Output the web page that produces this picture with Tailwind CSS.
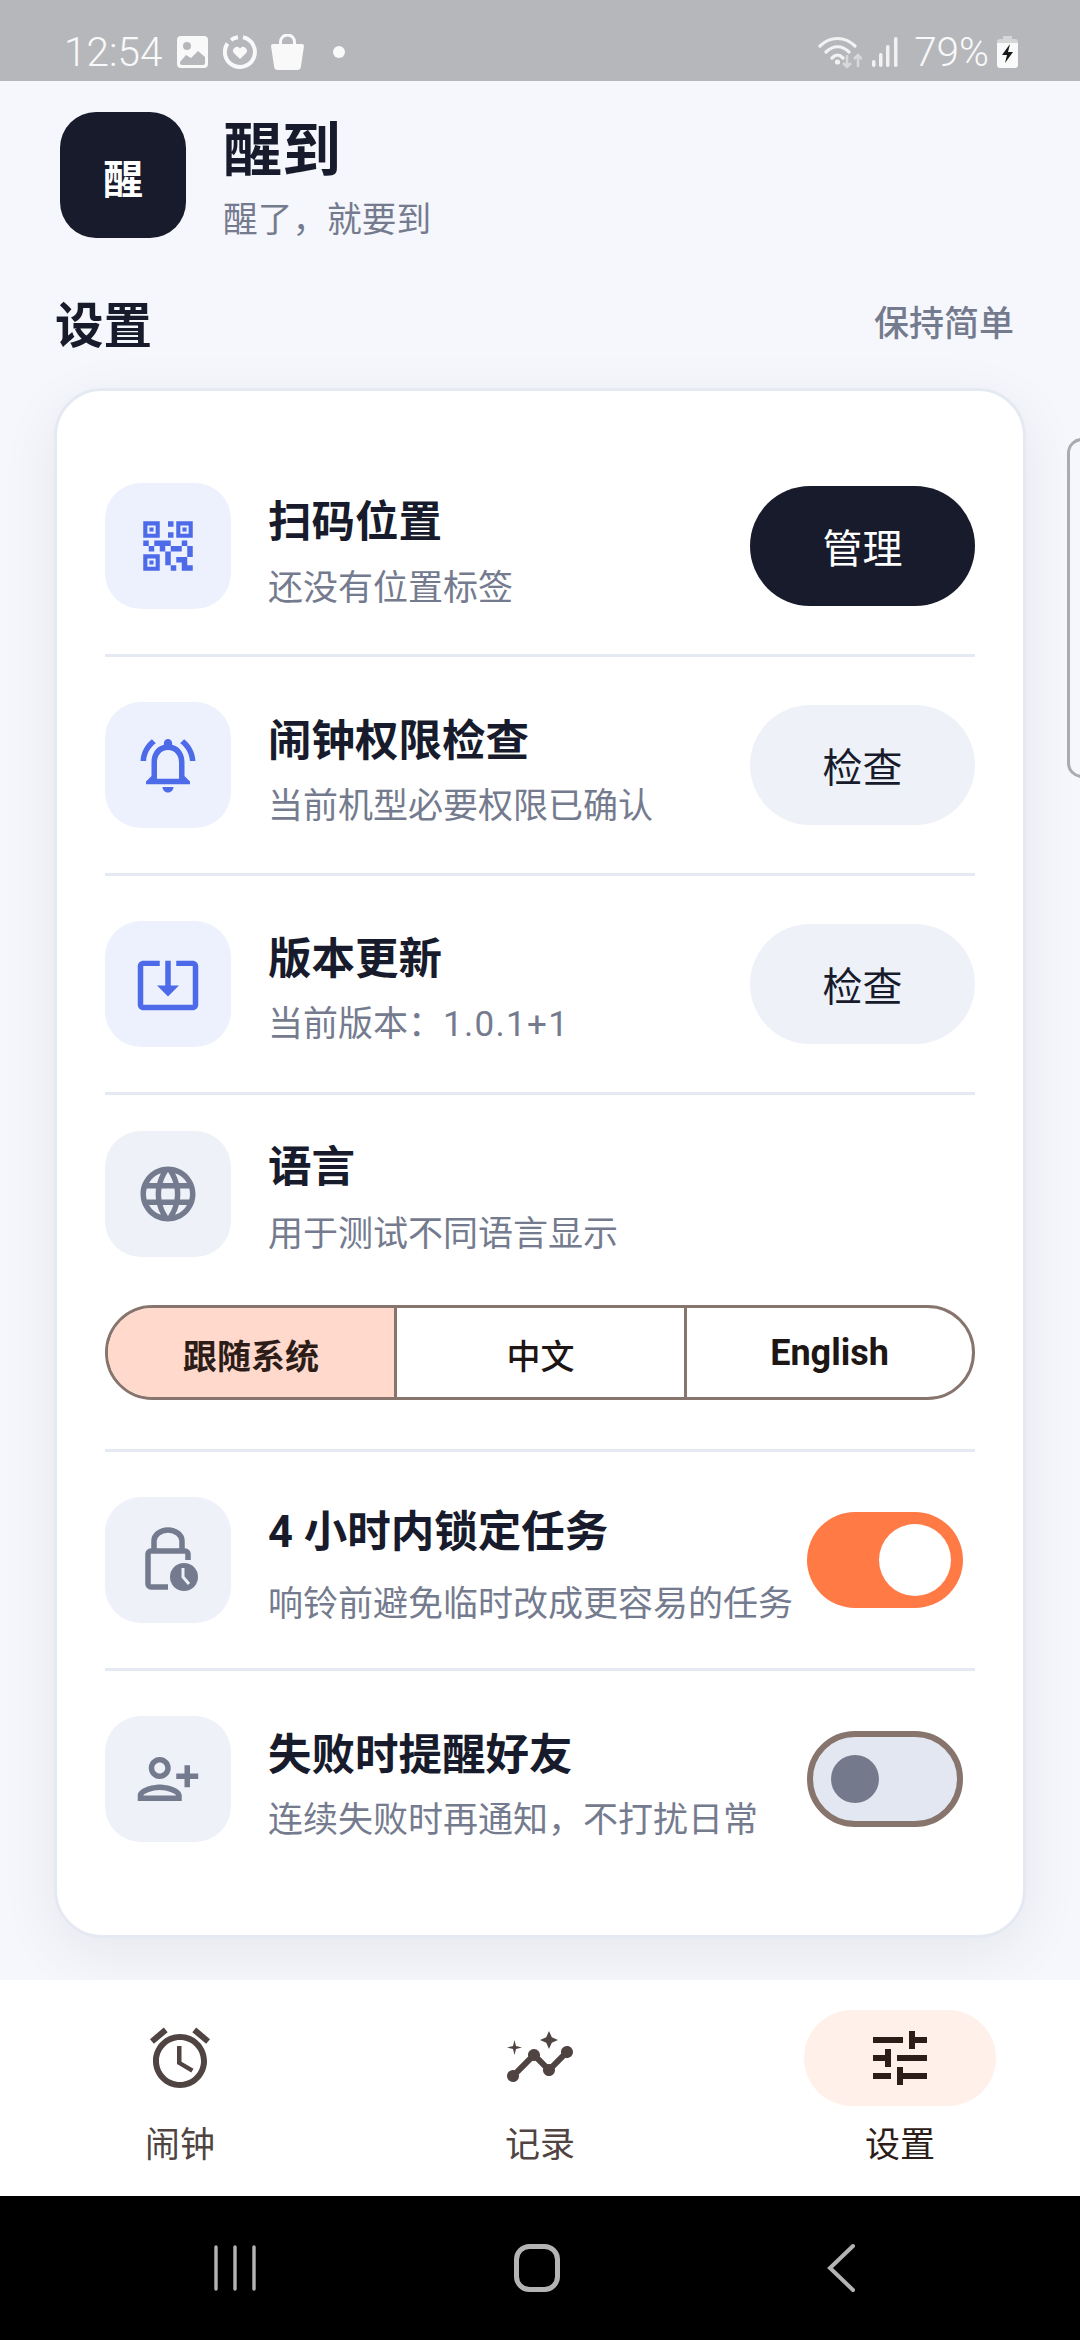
<!DOCTYPE html>
<html lang="zh-CN">
<head>
<meta charset="utf-8">
<script src="https://cdn.jsdelivr.net/npm/@tailwindcss/browser@4"></script>
</head>
<body class="m-0">
<div class="relative w-[1080px] h-[2340px] overflow-hidden flex flex-col bg-[#f6f7fc] [font-family:'Roboto','Noto_Sans_CJK_SC',sans-serif]">

  <!-- status bar -->
  <div class="h-[81px] shrink-0 bg-[#b6b7bb] flex items-center justify-between pl-[64px] pr-[62px] pt-[23px] text-[#f9f9fa]">
    <div class="flex items-center">
      <span class="text-[40.500px] leading-[44px] font-light">12:54</span>
      <svg class="ml-[15px]" width="31" height="32" viewBox="0 0 31 32"><path fill="#f9f9fa" fill-rule="evenodd" d="M4 0h23a4 4 0 0 1 4 4v24a4 4 0 0 1-4 4H4a4 4 0 0 1-4-4V4a4 4 0 0 1 4-4zM3 26v1a2 2 0 0 0 2 2h21a2 2 0 0 0 2-2v-6l-7-6-7 7-5-3zM10 6a4 4 0 1 0 0 8 4 4 0 0 0 0-8z"/></svg>
      <svg class="ml-[15px]" width="34" height="34" viewBox="0 0 34 34" fill="none"><path d="M8 5A15 15 0 0 1 15 2.200M20 2.300A15 15 0 1 1 4.500 8.500" stroke="#f9f9fa" stroke-width="4"/><path fill="#f9f9fa" d="M17 24l-6.200-6A3.800 3.800 0 0 1 17 13.500 3.800 3.800 0 0 1 23.200 18z"/></svg>
      <svg class="ml-[14px]" width="33" height="36" viewBox="0 0 33 36"><path fill="none" stroke="#f9f9fa" stroke-width="3" d="M9.500 12V8a7 7 0 0 1 14 0v4"/><path fill="#f9f9fa" d="M2 10h29a2 2 0 0 1 2 2l-3 20a4 4 0 0 1-4 4H7a4 4 0 0 1-4-4L0 12a2 2 0 0 1 2-2z"/></svg>
      <span class="ml-[29px] w-[12px] h-[12px] rounded-full bg-[#f9f9fa]"></span>
    </div>
    <div class="flex items-center">
      <svg width="44" height="34" viewBox="0 0 44 34" fill="none">
        <path d="M2 11C12 1 27 1 37 11M8 17C15 10 24 10 31 17M14 23C18 19 21 19 25 23" stroke="#f2f2f3" stroke-width="3.200" stroke-linecap="round"/>
        <circle cx="19.500" cy="27" r="2.600" fill="#f2f2f3"/>
        <path d="M29 20v12M25 28l4 4 4-4" stroke="#d7d8da" stroke-width="2.600"/>
        <path d="M40 32V20M36 24l4-4 4 4" stroke="#d7d8da" stroke-width="2.600"/>
      </svg>
      <svg class="ml-[10px]" width="27" height="30" viewBox="0 0 27 30"><g fill="#f2f2f3"><rect x="0" y="23" width="3.500" height="7" rx="1.700"/><rect x="7" y="16" width="3.500" height="14" rx="1.700"/><rect x="14" y="8" width="3.500" height="22" rx="1.700"/><rect x="22" y="0" width="3.500" height="30" rx="1.700"/></g></svg>
      <span class="ml-[15px] text-[40.500px] leading-[44px] font-light">79%</span>
      <svg class="ml-[8px]" width="21" height="32" viewBox="0 0 21 32"><path fill="#d5d6d8" d="M6 0h9v3h3a3 3 0 0 1 3 3v5H0V6a3 3 0 0 1 3-3h3z"/><path fill="#fafafa" d="M0 7h21v22a3 3 0 0 1-3 3H3a3 3 0 0 1-3-3z"/><path fill="#17181a" d="M13 8 5 19h5l-2 8 8-11h-5z"/></svg>
    </div>
  </div>

  <!-- main -->
  <main class="h-[1899px] shrink-0 overflow-hidden">
    <header class="flex items-start h-[157px] pt-[31px] pl-[60px]">
      <div class="w-[126px] h-[126px] rounded-[36px] bg-[#171b2b] flex items-center justify-center text-white text-[40px] leading-none font-bold pt-[12px]">醒</div>
      <div class="ml-[37px] flex flex-col h-[126px] pt-[6px]">
        <h1 class="m-0 text-[59px] leading-[66px] font-bold text-[#171b2b]">醒到</h1>
        <p class="m-0 mt-[14px] text-[34.700px] leading-[44px] text-[#757b8e]">醒了，就要到</p>
      </div>
    </header>
    <div class="flex items-center justify-between pl-[55px] pr-[66px] h-[150px]">
      <h2 class="m-0 text-[48.500px] leading-[60px] font-bold text-[#171b2b] mt-[27px]">设置</h2>
      <span class="text-[35px] leading-[44px] font-medium text-[#757b8e] mt-[24px]">保持简单</span>
    </div>

    <section class="mx-[54px] h-[1550px] rounded-[48px] border-[3px] border-[#e4e9f2] bg-white px-[48px] py-[47px] shadow-[0_16px_60px_rgba(23,27,43,0.07)]">
      <!-- row 1 -->
      <div class="flex items-center h-[219px] border-b-[3px] border-[#e4e9f2]">
        <div class="w-[126px] h-[126px] shrink-0 rounded-[36px] bg-[#edf1fe] flex items-center justify-center">
          <svg width="66" height="66" viewBox="0 0 24 24" fill="#4d6ae8"><path fill-rule="evenodd" d="M15,21h-2v-2h2V21z M13,14h-2v5h2V14z M21,12h-2v4h2V12z M19,10h-2v2h2V10z M7,12H5v2h2V12z M5,10H3v2h2V10z M12,5h2V3h-2V5z M9,9H3V3h6V9z M4.500,4.500v3h3v-3H4.500z M9,21H3v-6h6V21z M4.500,16.500v3h3v-3H4.500z M21,9h-6V3h6V9z M16.500,4.500v3h3v-3H16.500z M19,19v-3l-4,0v2h2v3h4v-2H19z M17,12l-4,0v2h4V12z M13,10H7v2h2v2h2v-2h2V10z M14,9V7h-2v2h2z M6.750,5.250h-1.500v1.500h1.500V5.250z M6.750,17.250h-1.500v1.500h1.500V17.250z M18.750,5.250h-1.500v1.500h1.500V5.250z"/></svg>
        </div>
        <div class="ml-[37px] flex-1 min-w-0 pt-[14px]">
          <div class="text-[43.500px] leading-[56px] font-semibold text-[#171b2b]">扫码位置</div>
          <div class="mt-[15px] text-[35px] leading-[46px] text-[#757b8e]">还没有位置标签</div>
        </div>
        <div class="w-[225px] h-[120px] shrink-0 rounded-full bg-[#171b2b] text-white text-[40px] leading-[50px] flex items-center justify-center pt-[7px]">管理</div>
      </div>
      <!-- row 2 -->
      <div class="flex items-center h-[219px] border-b-[3px] border-[#e4e9f2]">
        <div class="w-[126px] h-[126px] shrink-0 rounded-[36px] bg-[#edf1fe] flex items-center justify-center">
          <svg width="66" height="66" viewBox="0 0 24 24" fill="#4d6ae8"><path d="M12 22c1.100 0 2-.9 2-2h-4c0 1.100.89 2 2 2zm6-6v-5c0-3.070-1.640-5.640-4.500-6.320V4c0-.83-.67-1.500-1.500-1.500s-1.500.67-1.500 1.500v.68C7.630 5.360 6 7.920 6 11v5l-2 2v1h16v-1l-2-2zm-2 1H8v-6c0-2.480 1.510-4.500 4-4.500s4 2.020 4 4.500v6zM7.580 4.080 6.150 2.650C3.750 4.480 2.170 7.300 2.030 10.500h2c.15-2.650 1.510-4.970 3.550-6.420zm12.390 6.420h2c-.15-3.200-1.730-6.020-4.120-7.850l-1.420 1.430c2.020 1.450 3.390 3.770 3.540 6.420z"/></svg>
        </div>
        <div class="ml-[37px] flex-1 min-w-0 pt-[14px]">
          <div class="text-[43.500px] leading-[56px] font-semibold text-[#171b2b]">闹钟权限检查</div>
          <div class="mt-[14px] text-[35px] leading-[46px] text-[#757b8e]">当前机型必要权限已确认</div>
        </div>
        <div class="w-[225px] h-[120px] shrink-0 rounded-full bg-[#eef1f8] text-[#171b2b] text-[40px] leading-[50px] flex items-center justify-center pt-[7px]">检查</div>
      </div>
      <!-- row 3 -->
      <div class="flex items-center h-[219px] border-b-[3px] border-[#e4e9f2]">
        <div class="w-[126px] h-[126px] shrink-0 rounded-[36px] bg-[#edf1fe] flex items-center justify-center">
          <svg width="66" height="66" viewBox="0 0 24 24" fill="#4d6ae8"><path d="M12 16.500l4-4h-3v-9h-2v9H8l4 4zm9-13h-6v1.990h6v14.030H3V5.490h6V3.500H3c-1.100 0-2 .9-2 2v14c0 1.100.9 2 2 2h18c1.100 0 2-.9 2-2v-14c0-1.100-.9-2-2-2z"/></svg>
        </div>
        <div class="ml-[37px] flex-1 min-w-0 pt-[12px]">
          <div class="text-[43.500px] leading-[56px] font-semibold text-[#171b2b]">版本更新</div>
          <div class="mt-[14px] text-[35px] leading-[46px] text-[#757b8e]">当前版本：<span class="tracking-[1.300px]">1.0.1+1</span></div>
        </div>
        <div class="w-[225px] h-[120px] shrink-0 rounded-full bg-[#eef1f8] text-[#171b2b] text-[40px] leading-[50px] flex items-center justify-center pt-[7px]">检查</div>
      </div>
      <!-- row 4 language -->
      <div class="pt-[36px] pb-[49px] border-b-[3px] border-[#e4e9f2]">
        <div class="flex items-center h-[126px]">
          <div class="w-[126px] h-[126px] shrink-0 rounded-[36px] bg-[#eef1f8] flex items-center justify-center">
            <svg width="66" height="66" viewBox="0 0 24 24" fill="#757b8e"><path d="M11.990 2C6.470 2 2 6.480 2 12s4.470 10 9.990 10C17.520 22 22 17.520 22 12S17.520 2 11.990 2zm6.930 6h-2.950c-.32-1.250-.78-2.450-1.380-3.560 1.840.63 3.370 1.910 4.330 3.560zM12 4.040c.83 1.200 1.480 2.530 1.910 3.960h-3.820c.43-1.430 1.080-2.760 1.910-3.960zM4.260 14C4.100 13.360 4 12.690 4 12s.1-1.360.26-2h3.380c-.08.66-.14 1.320-.14 2s.06 1.340.14 2H4.260zm.82 2h2.950c.32 1.250.78 2.450 1.380 3.560-1.840-.63-3.370-1.900-4.330-3.560zm2.950-8H5.080c.96-1.660 2.490-2.930 4.330-3.560C8.810 5.550 8.350 6.750 8.030 8zM12 19.960c-.83-1.200-1.480-2.530-1.910-3.960h3.820c-.43 1.430-1.080 2.760-1.910 3.960zM14.340 14H9.660c-.09-.66-.16-1.320-.16-2s.07-1.350.16-2h4.680c.09.650.16 1.320.16 2s-.07 1.340-.16 2zm.25 5.560c.6-1.110 1.060-2.310 1.380-3.560h2.950c-.96 1.650-2.490 2.930-4.330 3.560zM16.360 14c.08-.66.14-1.320.14-2s-.06-1.340-.14-2h3.380c.16.64.26 1.310.26 2s-.1 1.360-.26 2h-3.380z"/></svg>
          </div>
          <div class="ml-[37px] flex-1 min-w-0 pt-[10px]">
            <div class="text-[43.500px] leading-[56px] font-semibold text-[#171b2b]">语言</div>
            <div class="mt-[16px] text-[35px] leading-[46px] text-[#757b8e]">用于测试不同语言显示</div>
          </div>
        </div>
        <div class="mt-[48px] h-[95px] rounded-full border-[3px] border-[#87756d] overflow-hidden grid grid-cols-[289px_290px_1fr] text-[#1d1614]">
          <div class="bg-[#ffd9cc] border-r-[3px] border-[#87756d] flex items-center justify-center text-[34px] font-semibold text-[#2d1d18] pt-[9px]">跟随系统</div>
          <div class="border-r-[3px] border-[#87756d] flex items-center justify-center text-[34px] font-medium pt-[10px]">中文</div>
          <div class="flex items-center justify-center text-[36px] font-bold">English</div>
        </div>
      </div>
      <!-- row 5 -->
      <div class="flex items-center h-[219px] border-b-[3px] border-[#e4e9f2]">
        <div class="w-[126px] h-[126px] shrink-0 rounded-[36px] bg-[#eef1f8] flex items-center justify-center">
          <svg width="66" height="66" viewBox="0 0 66 66" fill="none">
            <path d="M19 22V14a14 11 0 0 1 28 0v8" stroke="#757b8e" stroke-width="5.500"/>
            <path d="M33 60H16a3 3 0 0 1-3-3V27a3 3 0 0 1 3-3h34a3 3 0 0 1 3 3v6" stroke="#757b8e" stroke-width="5.500"/>
            <circle cx="49" cy="50" r="14" fill="#757b8e"/>
            <path d="M48 41v9l6 7" stroke="#eef1f8" stroke-width="3"/>
          </svg>
        </div>
        <div class="ml-[37px] flex-1 min-w-0 pt-[12px]">
          <div class="text-[43.500px] leading-[56px] font-semibold text-[#171b2b]"><span class="font-bold">4</span> 小时内锁定任务</div>
          <div class="mt-[21px] text-[35px] leading-[46px] text-[#757b8e] whitespace-nowrap">响铃前避免临时改成更容易的任务</div>
        </div>
        <div class="w-[156px] h-[96px] shrink-0 mr-[12px] rounded-full bg-[#ff7a45] flex items-center justify-end pr-[12px]">
          <div class="w-[72px] h-[72px] rounded-full bg-white"></div>
        </div>
      </div>
      <!-- row 6 -->
      <div class="flex items-center h-[216px]">
        <div class="w-[126px] h-[126px] shrink-0 rounded-[36px] bg-[#eef1f8] flex items-center justify-center">
          <svg class="-scale-x-100" width="66" height="66" viewBox="0 0 24 24" fill="#757b8e"><path d="M15 12c2.210 0 4-1.790 4-4s-1.790-4-4-4-4 1.790-4 4 1.790 4 4 4zm0-6c1.100 0 2 .9 2 2s-.9 2-2 2-2-.9-2-2 .9-2 2-2zm0 8c-2.670 0-8 1.340-8 4v2h16v-2c0-2.660-5.330-4-8-4zm-6 4c.22-.72 3.310-2 6-2 2.700 0 5.800 1.290 6 2H9zm-3-3v-3h3v-2H6V7H4v3H1v2h3v3h2z"/></svg>
        </div>
        <div class="ml-[37px] flex-1 min-w-0 pt-[13px]">
          <div class="text-[43.500px] leading-[56px] font-semibold text-[#171b2b]">失败时提醒好友</div>
          <div class="mt-[14px] text-[35px] leading-[46px] text-[#757b8e] whitespace-nowrap">连续失败时再通知，不打扰日常</div>
        </div>
        <div class="w-[156px] h-[96px] shrink-0 mr-[12px] rounded-full bg-[#e3e7f1] border-[6px] border-[#87756d] flex items-center pl-[18px]">
          <div class="w-[48px] h-[48px] rounded-full bg-[#74798b]"></div>
        </div>
      </div>
    </section>
  </main>

  <!-- bottom nav -->
  <nav class="h-[216px] shrink-0 bg-white grid grid-cols-3 pt-[30px]">
    <div class="flex flex-col items-center">
      <div class="w-[192px] h-[96px] rounded-full flex items-center justify-center">
        <svg width="72" height="72" viewBox="0 0 24 24" fill="#4f4441"><path d="M22 5.720l-4.600-3.860-1.290 1.530 4.600 3.860L22 5.720zM7.880 3.390L6.600 1.860 2 5.710l1.290 1.530 4.590-3.850zM12.500 8H11v6l4.750 2.850.75-1.230-4-2.370V8zM12 4c-4.970 0-9 4.030-9 9s4.030 9 9 9 9-4.030 9-9-4.030-9-9-9zm0 16c-3.870 0-7-3.130-7-7s3.130-7 7-7 7 3.130 7 7-3.130 7-7 7z"/></svg>
      </div>
      <span class="mt-[17px] text-[35px] leading-[46px] text-[#4f4441]">闹钟</span>
    </div>
    <div class="flex flex-col items-center">
      <div class="w-[192px] h-[96px] rounded-full flex items-center justify-center">
        <svg width="72" height="72" viewBox="0 0 24 24" fill="#4f4441"><path d="M21 8c-1.450 0-2.260 1.440-1.930 2.510l-3.550 3.560c-.3-.09-.74-.09-1.040 0l-2.550-2.550C12.270 10.450 11.460 9 10 9c-1.450 0-2.270 1.440-1.930 2.520l-4.560 4.550C2.440 15.740 1 16.550 1 18c0 1.100.9 2 2 2 1.450 0 2.260-1.440 1.930-2.510l4.550-4.560c.3.09.74.09 1.040 0l2.550 2.550C12.730 16.550 13.540 18 15 18c1.450 0 2.270-1.440 1.930-2.520l3.560-3.550c1.070.33 2.510-.48 2.510-1.930 0-1.100-.9-2-2-2z"/><path d="M15 9l.94-2.070L18 6l-2.060-.93L15 3l-.92 2.070L12 6l2.080.93L15 9zM3.500 11 4 9l2-.5L4 8l-.5-2L3 8l-2 .5L3 9l.5 2z"/></svg>
      </div>
      <span class="mt-[17px] text-[35px] leading-[46px] text-[#4f4441]">记录</span>
    </div>
    <div class="flex flex-col items-center">
      <div class="w-[192px] h-[96px] rounded-full bg-[#fff0e9] flex items-center justify-center">
        <svg width="72" height="72" viewBox="0 0 24 24" fill="#2d1d18"><path d="M3 17v2h6v-2H3zM3 5v2h10V5H3zm10 16v-2h8v-2h-8v-2h-2v6h2zM7 9v2H3v2h4v2h2V9H7zm14 4v-2H11v2h10zm-6-4h2V7h4V5h-4V3h-2v6z"/></svg>
      </div>
      <span class="mt-[17px] text-[35px] leading-[46px] text-[#2d1d18]">设置</span>
    </div>
  </nav>

  <!-- system nav -->
  <div class="h-[144px] shrink-0 bg-black flex items-center pl-[214px]">
    <svg width="42" height="48" viewBox="0 0 42 48" fill="none" stroke="#b4b4b4" stroke-width="3.400" stroke-linecap="round"><path d="M2 3v42M21 3v42M40 3v42"/></svg>
    <svg class="ml-[258px]" width="46" height="48" viewBox="0 0 46 48" fill="none"><rect x="2.500" y="2.500" width="41" height="43" rx="13" stroke="#b4b4b4" stroke-width="5"/></svg>
    <svg class="ml-[267px]" width="28" height="50" viewBox="0 0 28 50" fill="none"><path d="M26 3 3 25l23 22" stroke="#b4b4b4" stroke-width="4" stroke-linecap="round"/></svg>
  </div>

  <!-- edge handle overlay -->
  <div class="absolute left-[1067px] top-[438px] w-[30px] h-[340px] rounded-l-[15px] border-[3px] border-[#a9abae]"></div>
</div>
</body>
</html>
